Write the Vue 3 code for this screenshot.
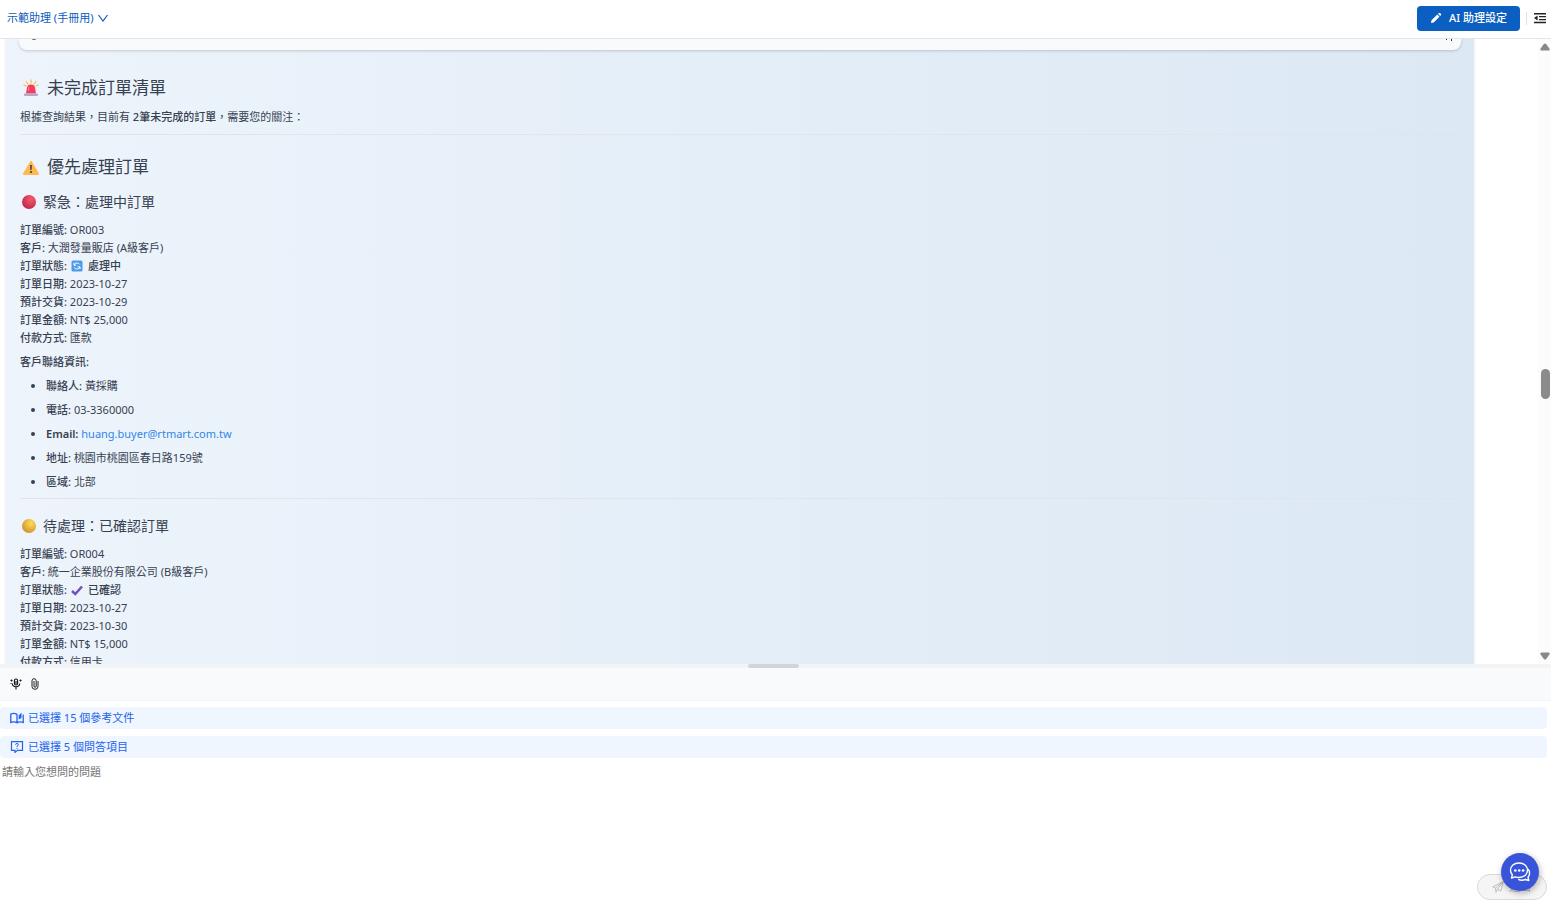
<template>
  <div class="assistant-page">
    <header class="top-bar">
      <button type="button" class="assistant-switch">
        示範助理 (手冊用)
        <svg width="10" height="8" viewBox="0 0 10 8" fill="none" stroke="currentColor" stroke-width="1.2">
          <path d="M0.5 1 L5 7 L9.5 1" />
        </svg>
      </button>
      <div class="top-actions">
        <button type="button" class="setting-button">
          <svg width="12" height="12" viewBox="0 0 12 12" fill="currentColor">
            <path d="M1 11 L1.5 8.3 L7.3 2.5 L9.5 4.7 L3.7 10.5 Z M8 1.8 L9 0.9 Q9.5 0.5 10 1 L11 2 Q11.5 2.5 11 3 L10.2 4 Z" />
          </svg>
          AI 助理設定
        </button>
        <span class="divider"></span>
        <button type="button" class="icon-button" aria-label="收合側欄">
          <svg width="12" height="12" viewBox="0 0 12 12" fill="#222">
            <path d="M0 1h12v1.4H0z M5 4h7v1.3H5z M5 6.9h7v1.3H5z M0 9.8h12v1.4H0z M0 6.1 L3.6 3.6 V8.6z" />
          </svg>
        </button>
      </div>
    </header>

    <main class="chat-area">
      <div class="chat-list">
        <article class="message">
          <div class="prev-card">
            <svg width="8" height="2" viewBox="0 0 8 2" fill="none" stroke="#556070">
              <path d="M2 0 Q4 1 6 0" />
            </svg>
            <svg width="8" height="2" viewBox="0 0 8 2" fill="#333">
              <path d="M0 0h1v1H0z M5 0h1v2H5z" />
            </svg>
          </div>

          <h2>
            <svg class="emoji-large" viewBox="0 0 18 18">
              <path d="M4 2.5 L6 5 M9 0.8 V4 M14 2.5 L12 5 M2 6 L4 7 M16 6 L14 7" stroke="#f8bd45" stroke-width="1.2" stroke-linecap="round" />
              <path d="M4 14.5 L5 8.5 Q5.5 5.5 9 5.5 Q12.5 5.5 13 8.5 L14 14.5z" fill="#f53d59" />
              <path d="M7 8 L6.5 12" stroke="#ff8796" />
              <rect x="2" y="14.5" width="14" height="2.5" rx="1" fill="#b9a5c9" />
            </svg>
            未完成訂單清單
          </h2>
          <p>根據查詢結果，目前有 <strong>2筆未完成的訂單</strong>，需要您的關注：</p>
          <hr />

          <h2>
            <svg class="emoji-large" viewBox="0 0 18 18">
              <path d="M8.2 3.5 Q9 2.2 9.8 3.5 L17 15.5 Q17.5 16.8 16 17 H2 Q0.5 16.8 1 15.5z" fill="#ffb84d" />
              <path d="M8.1 7 H9.9 L9.6 12 H8.4z" fill="#433b42" />
              <circle cx="9" cy="14" r="1.1" fill="#433b42" />
            </svg>
            優先處理訂單
          </h2>

          <section v-for="order in orders" :key="order.id">
            <h3>
              <svg class="emoji-circle" viewBox="0 0 14 14">
                <defs>
                  <radialGradient :id="order.id" cx="65%" cy="30%" r="75%">
                    <stop offset="0" :stop-color="order.light" />
                    <stop offset="1" :stop-color="order.dark" />
                  </radialGradient>
                </defs>
                <circle cx="7" cy="7" r="7" :fill="`url(#${order.id})`" />
              </svg>
              {{ order.title }}
            </h3>
            <ul class="fields">
              <li><strong>訂單編號:</strong> {{ order.id }}</li>
              <li><strong>客戶:</strong> {{ order.customer }}</li>
              <li>
                <strong>訂單狀態:</strong>
                <svg v-if="order.status === '處理中'" class="emoji-small" viewBox="0 0 12 12">
                  <rect x="0.5" y="0.5" width="11" height="11" rx="1.5" fill="#4b9bea" />
                  <path d="M3 5 Q4 2.8 6.3 3 Q8 3.2 8.8 4.5 M9 7 Q8 9.2 5.7 9 Q4 8.8 3.2 7.5 M3 2.8 V5.2 H5.3 M9 9.2 V6.8 H6.7" fill="none" stroke="#fff" stroke-width="1" />
                </svg>
                <svg v-else class="emoji-small" viewBox="0 0 12 12">
                  <path d="M1 7 L4.3 10 L11 2.5" fill="none" stroke="#7453b8" stroke-width="2.6" />
                </svg>
                <strong>{{ order.status }}</strong>
              </li>
              <li><strong>訂單日期:</strong> {{ order.date }}</li>
              <li><strong>預計交貨:</strong> {{ order.delivery }}</li>
              <li><strong>訂單金額:</strong> {{ order.amount }}</li>
              <li><strong>付款方式:</strong> {{ order.payment }}</li>
            </ul>
            <template v-if="order.contacts">
              <p class="contact-title"><strong>客戶聯絡資訊:</strong></p>
              <ul class="contacts">
                <li v-for="item in order.contacts" :key="item.label">
                  <strong :class="{ latin: item.link }">{{ item.label }}:</strong>&nbsp;<a v-if="item.link" :href="`mailto:${item.value}`">{{ item.value }}</a>
                  <template v-else>{{ item.value }}</template>
                </li>
              </ul>
              <hr />
            </template>
          </section>
        </article>
      </div>
      <div class="scrollbar" aria-hidden="true">
        <svg width="10" height="8" viewBox="0 0 10 8" fill="#888">
          <path d="M3.8 1 Q5 0 6.2 1 L9.7 6 Q10 7.5 8.5 7.5 H1.5 Q0 7.5 0.3 6z" />
        </svg>
        <span class="track-before"></span>
        <span class="thumb"></span>
        <span class="track-after"></span>
        <svg width="10" height="8" viewBox="0 0 10 8" fill="#888">
          <path d="M3.8 7 Q5 8 6.2 7 L9.7 2 Q10 0.5 8.5 0.5 H1.5 Q0 0.5 0.3 2z" />
        </svg>
      </div>
    </main>

    <div class="resizer"><span></span></div>

    <footer class="composer">
      <div class="toolbar">
        <button type="button" class="icon-button" aria-label="語音輸入">
          <svg width="12" height="12" viewBox="0 0 12 12" fill="none" stroke="#111" stroke-width="1.1">
            <rect x="4.4" y="1" width="3.2" height="6" rx="1.6" />
            <path d="M2.3 5.5 Q2.5 8.8 6 8.8 Q9.5 8.8 9.7 5.5 M6 8.8 V11.5 M6 3 V6" />
            <path d="M0.5 2.5 H2.5 M1.5 1.5 V3.5 M9.5 2.5 H11.5 M10.5 1.5 V3.5 M0.5 5.5h1" />
          </svg>
        </button>
        <button type="button" class="icon-button" aria-label="附加檔案">
          <svg width="8" height="12" viewBox="0 0 8 12" fill="none" stroke="#222" stroke-width="1">
            <path d="M7 3 V8.5 Q7 11.3 4 11.3 Q1 11.3 1 8.5 V2.8 Q1 0.7 3 0.7 Q5.2 0.7 5.2 2.8 V8 Q5.2 9.3 4.1 9.3 Q3 9.3 3 8 V3" />
          </svg>
        </button>
      </div>
      <button type="button" class="selection">
        <svg width="14" height="12" viewBox="0 0 14 12" fill="none" stroke="currentColor" stroke-width="1.3">
          <path d="M7 10.7 Q4 9.2 0.8 10.5 V2 Q4 0.8 7 2.3z M7 10.7 Q10 9.2 13.2 10.5 V2.5" />
          <path d="M8.7 7.5 V3.5 L11.5 0.5 V6z" fill="currentColor" stroke="none" />
        </svg>
        已選擇 15 個參考文件
      </button>
      <button type="button" class="selection">
        <svg width="14" height="12" viewBox="0 0 14 12" fill="none" stroke="currentColor" stroke-width="1.2">
          <path d="M1.5 0.7 H12.5 V9.3 H7.5 L5 11.4 V9.3 H1.5z" />
          <path d="M5.5 3.8 Q5.6 2.5 7 2.5 Q8.4 2.5 8.4 3.7 Q8.4 4.5 7 5.2 V6 M7 6.9 V8" stroke-width="1" />
        </svg>
        已選擇 5 個問答項目
      </button>
      <textarea v-model="question" placeholder="請輸入您想問的問題" aria-label="問題"></textarea>
      <button type="button" class="send-button" disabled>
        <svg width="12" height="12" viewBox="0 0 12 12" fill="none" stroke="currentColor" stroke-width="0.9">
          <path d="M0.7 5.8 L11.4 0.6 L8.8 10.2 L5.6 8.1 L4 11.2 L3.5 7z M3.5 7 L11.4 0.6 L5.6 8.1" />
        </svg>
        送出
      </button>
    </footer>

    <button type="button" class="chat-bubble" aria-label="客服對話">
      <svg width="22" height="20" viewBox="0 0 22 20" fill="none" stroke="#fff" stroke-width="1.4" stroke-linejoin="round">
        <path d="M10 1 C15 1 18.5 4 18.5 8.3 C18.5 12.6 15 15.5 10 15.5 Q8 15.5 6.4 14.8 L2.5 16 L3.3 12.8 Q1.5 11 1.5 8.3 C1.5 4 5 1 10 1z" />
        <path d="M19 7 Q21 9 20.5 12 Q20.3 13.8 19 15.2 L19.8 18.5 L16.5 17.5 Q12.5 19 9.2 17.4" />
        <g fill="#fff" stroke="none">
          <circle cx="6.3" cy="8.5" r="1.3" />
          <circle cx="10.2" cy="8.5" r="1.3" />
          <circle cx="14.1" cy="8.5" r="1.3" />
        </g>
      </svg>
    </button>
  </div>
</template>

<script setup>
import { ref } from 'vue'

const question = ref('')

const orders = [
  {
    id: 'OR003',
    title: '緊急：處理中訂單',
    light: '#f5586c',
    dark: '#bd2948',
    customer: '大潤發量販店 (A級客戶)',
    status: '處理中',
    date: '2023-10-27',
    delivery: '2023-10-29',
    amount: 'NT$ 25,000',
    payment: '匯款',
    contacts: [
      { label: '聯絡人', value: '黃採購' },
      { label: '電話', value: '03-3360000' },
      { label: 'Email', value: 'huang.buyer@rtmart.com.tw', link: true },
      { label: '地址', value: '桃園市桃園區春日路159號' },
      { label: '區域', value: '北部' }
    ]
  },
  {
    id: 'OR004',
    title: '待處理：已確認訂單',
    light: '#ffdc58',
    dark: '#cf922e',
    customer: '統一企業股份有限公司 (B級客戶)',
    status: '已確認',
    date: '2023-10-27',
    delivery: '2023-10-30',
    amount: 'NT$ 15,000',
    payment: '信用卡'
  }
]
</script>

<style>
body {
  margin: 0;
}
</style>

<style scoped>
.assistant-page {
  height: 100vh;
  display: flex;
  flex-direction: column;
  overflow: hidden;
  background: #fff;
  color: #374151;
  font-family: 'Noto Sans', 'Noto Sans CJK TC', sans-serif;
  font-size: 11px;
  line-height: 18px;
}

button {
  display: flex;
  align-items: center;
  padding: 0;
  border: none;
  background: none;
  font: inherit;
  cursor: pointer;
}

svg {
  flex: none;
}

/* 頂部列 */
.top-bar {
  flex: none;
  display: flex;
  align-items: center;
  justify-content: space-between;
  height: 36px;
  padding: 0 5px 2px 7px;
  border-bottom: 1px solid #e2e4e8;
}

.assistant-switch {
  gap: 5px;
  color: #0b5cbd;
}

.top-actions {
  display: flex;
  align-items: center;
  gap: 6px;
}

.setting-button {
  gap: 7px;
  height: 25px;
  padding: 0 13px;
  border-radius: 4px;
  background: #0a5fc0;
  color: #fff;
  font-weight: 500;
}

.divider {
  width: 1px;
  height: 13px;
  margin-right: 1px;
  background: #e0e2e6;
}

/* 對話區 */
.chat-area {
  flex: 1;
  display: flex;
  min-height: 0;
}

.chat-list {
  flex: 1;
  min-width: 0;
  padding: 0 64px 0 6px;
  overflow: hidden;
}

.message {
  padding: 0 14px;
  background: linear-gradient(90deg, #edf4fb 0%, #e4eef8 50%, #dce8f4 100%);
  box-shadow: 0 0 3px rgba(0, 0, 0, 0.12);
}

.prev-card {
  display: flex;
  justify-content: space-between;
  height: 11px;
  margin: 0 -1px 26px;
  padding: 0 7px 0 11px;
  border-radius: 0 0 8px 8px;
  background: #f8fafc;
  box-shadow: 0 1px 3px rgba(0, 0, 0, 0.18);
}

h2,
h3 {
  display: flex;
  align-items: center;
  margin: 0;
  font-weight: 400;
}

h2 {
  gap: 7px;
  padding-left: 2px;
  margin-bottom: 8px;
  font-size: 17px;
  line-height: 24px;
}

h3 {
  gap: 7px;
  padding-left: 2px;
  margin: 13px 0 9px;
  font-size: 14px;
  line-height: 20px;
}

p {
  margin: 0;
}

strong {
  font-weight: 500;
}

.latin {
  font-weight: 600;
}

hr {
  height: 1px;
  margin: 8px 4px 20px 0;
  border: none;
  background: #e2e4e7;
}

.contacts + hr {
  margin: 7px 4px 17px 0;
}

.emoji-large {
  width: 18px;
  height: 18px;
}

.emoji-circle {
  width: 14px;
  height: 14px;
}

.emoji-small {
  width: 12px;
  height: 12px;
  margin: 0 5px 0 4px;
  vertical-align: -2px;
}

.fields,
.contacts {
  margin: 0;
  padding: 0;
  list-style: none;
}

.contact-title {
  margin: 6px 0;
}

.contacts {
  display: flex;
  flex-direction: column;
  gap: 6px;
  padding-left: 26px;
  list-style: disc;
}

.contacts a {
  color: #2f86eb;
  text-decoration: none;
}

.scrollbar {
  display: flex;
  flex-direction: column;
  align-items: flex-end;
  width: 12px;
  padding: 4px 1px 4px 0;
  background: #fcfcfc;
}

.track-before {
  flex: 318;
}

.track-after {
  flex: 253;
}

.thumb {
  width: 9px;
  height: 30px;
  border-radius: 5px;
  background: #8b8b8b;
}

.resizer {
  flex: none;
  display: flex;
  justify-content: center;
  height: 4px;
  padding-right: 4px;
  background: #f3f4f6;
}

.resizer span {
  width: 51px;
  border-radius: 2px;
  background: #d1d5db;
}

/* 輸入區 */
.composer {
  flex: none;
  display: flex;
  flex-direction: column;
  height: 26vh;
}

.toolbar {
  display: flex;
  align-items: center;
  gap: 9px;
  height: 32px;
  padding-left: 10px;
  margin-bottom: 6px;
  background: #f9fafb;
  border-bottom: 1px solid #f3f4f6;
}

.selection {
  flex: none;
  gap: 4px;
  height: 22px;
  margin: 0 4px 7px 0;
  padding-left: 10px;
  border-radius: 4px;
  background: #eff6ff;
  color: #2563eb;
}

textarea {
  flex: 1;
  min-height: 0;
  margin-top: -2px;
  padding: 0 2px;
  border: none;
  outline: none;
  resize: none;
  background: transparent;
  color: #374151;
  font: inherit;
}

textarea::placeholder {
  color: #757575;
}

.send-button {
  flex: none;
  align-self: flex-end;
  gap: 5px;
  width: 70px;
  height: 26px;
  margin: 0 4px 3px 0;
  padding-left: 14px;
  border: 1px solid #d9d9d9;
  border-radius: 13px;
  background: #f5f5f5;
  color: #b8b8b8;
  cursor: not-allowed;
}

.chat-bubble {
  position: fixed;
  right: 12px;
  bottom: 12px;
  justify-content: center;
  width: 38px;
  height: 38px;
  border-radius: 50%;
  background: #3855d9;
  box-shadow: 1px 2px 6px rgba(0, 0, 0, 0.3);
}
</style>
